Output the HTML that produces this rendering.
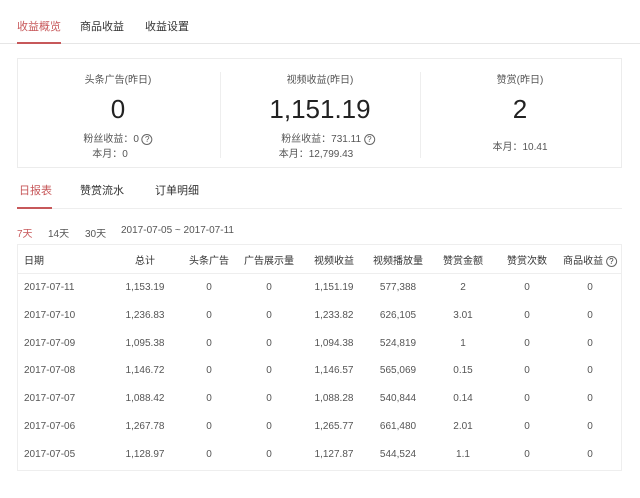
<!DOCTYPE html><html><head><meta charset="utf-8"><style>
body{margin:0;width:640px;height:498px;background:#fff;font-family:"Liberation Sans","Noto Sans CJK SC",sans-serif;color:#333;position:relative;overflow:hidden}
.a{position:absolute;white-space:nowrap}
.c{transform:translateX(-50%)}
.s{font-size:11px}
.t{font-size:10px;color:#555}
.q{display:inline-block;width:9px;height:9px;border:1px solid #666;border-radius:50%;font-size:8px;line-height:9px;text-align:center;vertical-align:middle}
</style></head><body>
<div class="a s" style="left:17px;top:18px;color:#c7585a">收益概览</div>
<div class="a s" style="left:80px;top:18px">商品收益</div>
<div class="a s" style="left:145px;top:18px">收益设置</div>
<div class="a" style="left:0;top:43px;width:640px;height:1px;background:#e6e6e6"></div>
<div class="a" style="left:17px;top:42px;width:44px;height:2px;background:#c7585a"></div>
<div class="a" style="left:17px;top:58px;width:605px;height:110px;border:1px solid #ececec;box-sizing:border-box"></div>
<div class="a" style="left:220px;top:72px;width:1px;height:86px;background:#eee"></div>
<div class="a" style="left:420px;top:72px;width:1px;height:86px;background:#eee"></div>
<div class="a c t" style="left:118px;top:71px">头条广告(昨日)</div>
<div class="a c" style="left:118px;top:94px;font-size:26px;color:#222">0</div>
<div class="a c t" style="left:118px;top:130px">粉丝收益：0 <span class="q">?</span></div>
<div class="a c t" style="left:110px;top:145px">本月：0</div>
<div class="a c t" style="left:320px;top:71px">视频收益(昨日)</div>
<div class="a c" style="left:320px;top:94px;font-size:26px;color:#222">1,151.19</div>
<div class="a c t" style="left:328px;top:130px">粉丝收益：731.11 <span class="q">?</span></div>
<div class="a c t" style="left:316px;top:145px">本月：12,799.43</div>
<div class="a c t" style="left:520px;top:71px">赞赏(昨日)</div>
<div class="a c" style="left:520px;top:94px;font-size:26px;color:#222">2</div>
<div class="a c t" style="left:520px;top:138px">本月：10.41</div>
<div class="a s" style="left:19px;top:182px;color:#c7585a">日报表</div>
<div class="a s" style="left:80px;top:182px">赞赏流水</div>
<div class="a s" style="left:155px;top:182px">订单明细</div>
<div class="a" style="left:17px;top:208px;width:605px;height:1px;background:#eee"></div>
<div class="a" style="left:17px;top:207px;width:35px;height:2px;background:#c7585a"></div>
<div class="a t" style="left:17px;top:225px;color:#c7585a">7天</div>
<div class="a t" style="left:48px;top:225px">14天</div>
<div class="a t" style="left:85px;top:225px">30天</div>
<div class="a t" style="left:121px;top:225px">2017-07-05 ~ 2017-07-11</div>
<div class="a" style="left:17px;top:244px;width:605px;height:227px;border:1px solid #eee;box-sizing:border-box"></div>
<div class="a" style="left:17px;top:273px;width:605px;height:1px;background:#eee"></div>
<div id="tb"></div>
<script>
var cx=[145,209,269,334,398,463,527,590];
var h=["总计","头条广告","广告展示量","视频收益","视频播放量","赞赏金额","赞赏次数","商品收益 <span class='q'>?</span>"];
var rows=[["2017-07-11","1,153.19","0","0","1,151.19","577,388","2","0","0"],["2017-07-10","1,236.83","0","0","1,233.82","626,105","3.01","0","0"],["2017-07-09","1,095.38","0","0","1,094.38","524,819","1","0","0"],["2017-07-08","1,146.72","0","0","1,146.57","565,069","0.15","0","0"],["2017-07-07","1,088.42","0","0","1,088.28","540,844","0.14","0","0"],["2017-07-06","1,267.78","0","0","1,265.77","661,480","2.01","0","0"],["2017-07-05","1,128.97","0","0","1,127.87","544,524","1.1","0","0"]];
var o='<div class="a t" style="left:24px;top:252px;color:#333">日期</div>';
h.forEach(function(x,i){o+='<div class="a c t" style="left:'+cx[i]+'px;top:252px;color:#333">'+x+'</div>'});
rows.forEach(function(r,j){var y=282+j*27.8;o+='<div class="a t" style="left:24px;top:'+y+'px">'+r[0]+'</div>';for(var i=1;i<9;i++)o+='<div class="a c t" style="left:'+cx[i-1]+'px;top:'+y+'px">'+r[i]+'</div>'});
document.getElementById('tb').innerHTML=o;
</script>
</body></html>
